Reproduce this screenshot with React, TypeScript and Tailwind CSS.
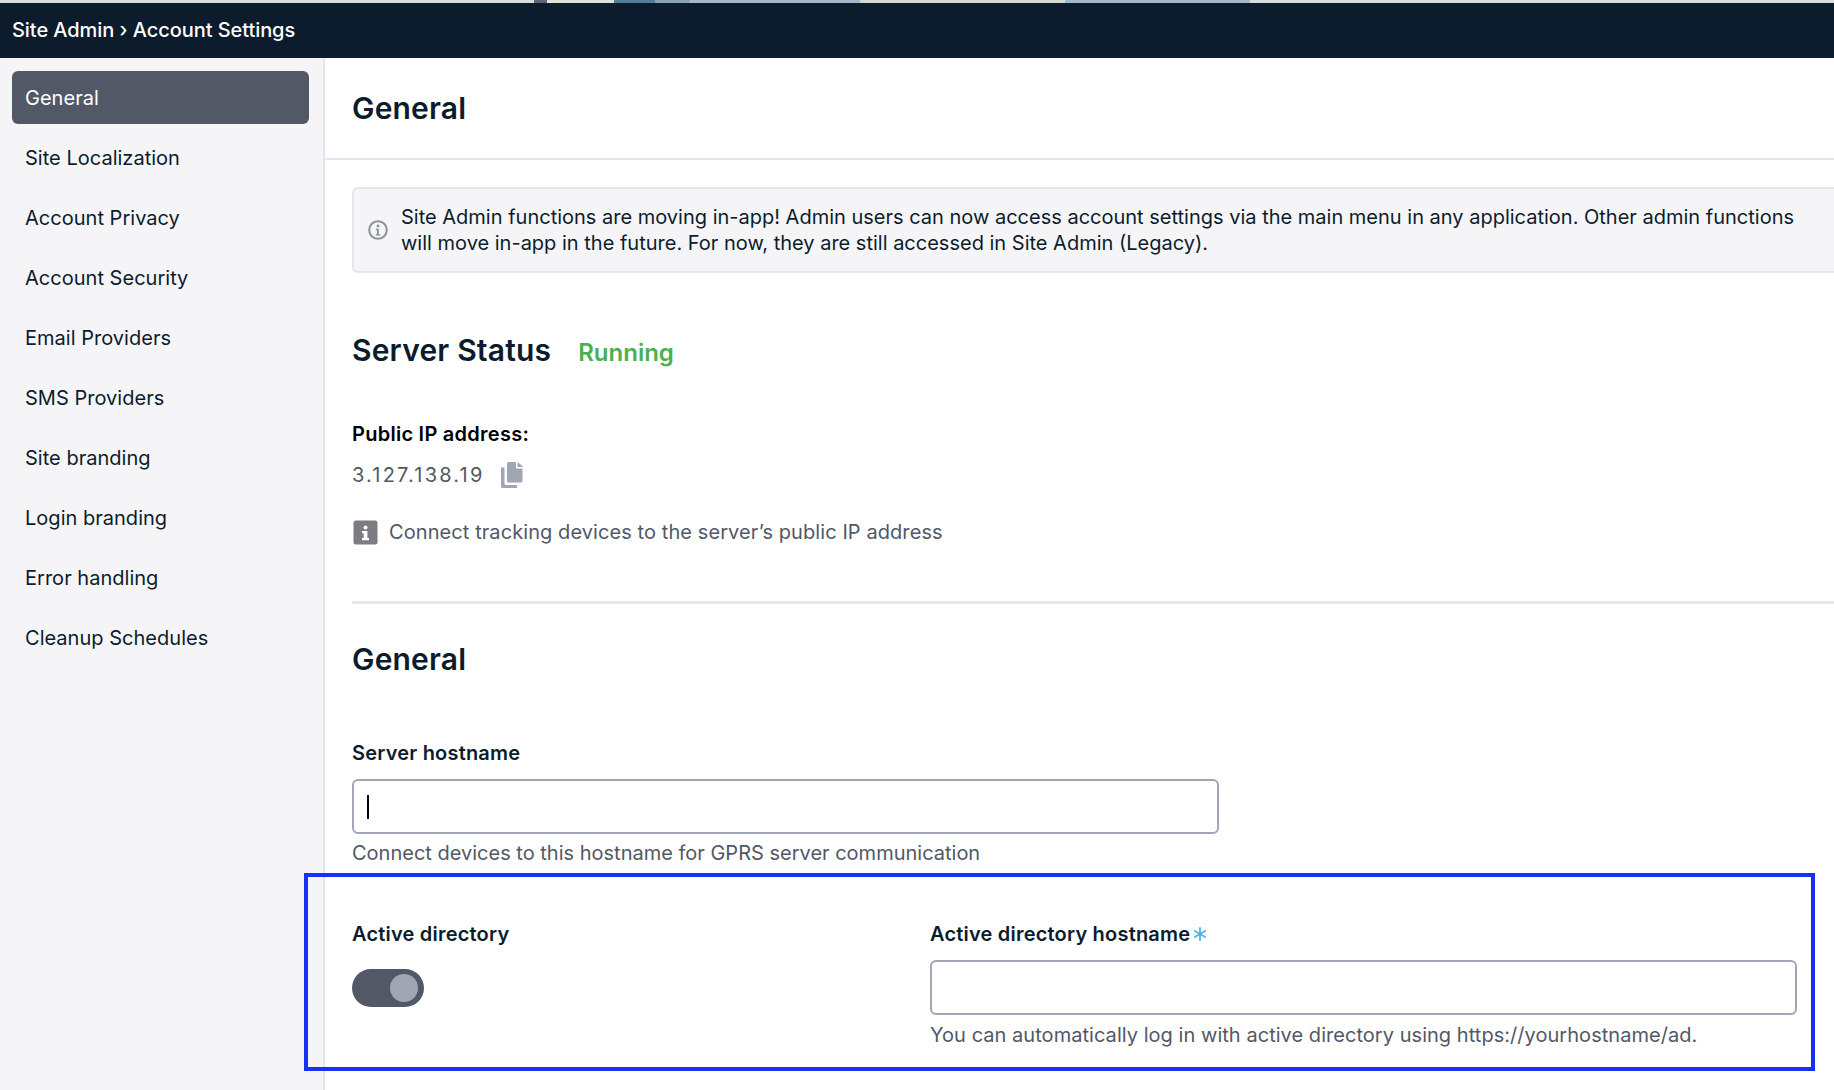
import { ReactNode } from 'react';
import { Asterisk } from 'lucide-react';

const navItems = [
  'General',
  'Site Localization',
  'Account Privacy',
  'Account Security',
  'Email Providers',
  'SMS Providers',
  'Site branding',
  'Login branding',
  'Error handling',
  'Cleanup Schedules',
];

const CircleInfo = () => (
  <svg width="20" height="20" viewBox="0 0 20 20" fill="none" className="shrink-0">
    <circle cx="10" cy="10" r="8.8" stroke="#8a909c" strokeWidth="2" />
    <circle cx="10" cy="6" r="1.4" fill="#8a909c" />
    <path d="M7.8 8.8h3v5.2h1.4v1.5H7.8V14h1.2v-3.7H7.8z" fill="#8a909c" />
  </svg>
);

const SquareInfo = () => (
  <svg width="25" height="25" viewBox="0 0 25 25" className="shrink-0">
    <rect x="0.5" y="0.5" width="24" height="24" rx="2.5" fill="#7b7d82" />
    <circle cx="12.5" cy="7.5" r="2" fill="#fff" />
    <path d="M9 11h5.4v7h1.6v2.2H9V18h1.7v-4.8H9z" fill="#fff" />
  </svg>
);

const CopyIcon = () => (
  <svg width="24" height="26" viewBox="0 0 24 26" className="shrink-0">
    <path d="M0 5.5h3.5V21.5a1.5 1.5 0 0 0 1.5 1.5h11V26H1.5A1.5 1.5 0 0 1 0 24.5z" fill="#a0a6b4" />
    <path d="M6 1.5A1.5 1.5 0 0 1 7.5 0H15v6.5h6.5V19a1.5 1.5 0 0 1-1.5 1.5H7.5A1.5 1.5 0 0 1 6 19z" fill="#a0a6b4" />
    <path d="M16.6 0l5.9 5H16.6z" fill="#a0a6b4" />
  </svg>
);

const Label = ({ children }: { children: ReactNode }) => (
  <div className="flex h-[26px] items-center text-[20px] leading-[26px] font-semibold tracking-[0.01em] text-[#0c1c2c]">{children}</div>
);

const App = () => {
  return (
    <div className="h-[1090px] w-[1834px] overflow-hidden bg-white font-['Inter',sans-serif] text-[#0c1c2c]">
      {/* sliver of the map behind the panel */}
      <div className="flex h-[3px] bg-[#dcdcdc]">
        <div className="w-[534px]" />
        <div className="w-[13px] bg-[#5d6674]" />
        <div className="w-[67px] bg-[#dfe3d6]" />
        <div className="w-[41px] bg-[#4f7f9b]" />
        <div className="w-[35px] bg-[#8ba3b3]" />
        <div className="w-[170px] bg-[#a3b9cb]" />
        <div className="w-[205px] bg-[#d6d6d2]" />
        <div className="w-[185px] bg-[#a3b9cb]" />
      </div>
      <header className="flex h-[55px] items-center bg-[#0c1c2c] pb-[2px] pl-3 text-[20px] font-medium tracking-[-0.003em] text-white">
        Site Admin › Account Settings
      </header>
      <div className="flex h-[1032px]">
        <aside className="flex w-[325px] shrink-0 flex-col gap-[7px] border-r-2 border-[#e3e6ee] bg-[#f5f5f8] pt-[13px] pr-[14px] pl-3">
          {navItems.map((item, i) => (
            <div
              key={item}
              className={`flex h-[53px] items-center rounded-md px-[13px] text-[20px] tracking-[0.001em] ${
                i === 0 ? 'bg-[#525866] text-white' : 'text-[#0c1c2c]'
              }`}
            >
              {item}
            </div>
          ))}
        </aside>
        <main className="min-w-0 flex-1 overflow-hidden">
          <div className="flex h-[102px] items-center border-b-2 border-[#e3e6ee] pl-[27px] text-[30px] font-semibold tracking-[0.006em]">
            General
          </div>
          <div className="w-[1600px] pl-[27px]">
            <div className="mt-[27px] flex h-[86px] w-[1573px] items-center gap-[13px] rounded-md border-2 border-[#e3e6ee] bg-[#f5f5f8] pl-[14px] text-[20px] leading-[26px]">
              <CircleInfo />
              <p className="w-[1400px]">
                Site Admin functions are moving in-app! Admin users can now access account settings via the main menu in any application. Other admin functions will move in-app in the future. For now, they are still accessed in Site Admin (Legacy).
              </p>
            </div>

            <div className="mt-[57px] flex h-[40px] items-center gap-[27px]">
              <h2 className="text-[30px] font-semibold tracking-[0.006em]">Server Status</h2>
              <span className="mt-[6px] text-[24px] font-semibold text-[#4caf50]">Running</span>
            </div>

            <div className="mt-[51px] text-[20px] leading-[26px] font-semibold tracking-[0.013em] text-black">Public IP address:</div>
            <div className="mt-[13px] flex h-[30px] items-center gap-4">
              <span className="text-[20px] tracking-[0.11em] text-[#525866]">3.127.138.19</span>
              <CopyIcon />
            </div>
            <div className="mt-[27px] flex h-[30px] w-[1000px] items-center gap-[11px] pl-[1px] text-[20px] tracking-[0.004em] text-[#525866]">
              <SquareInfo />
              Connect tracking devices to the server’s public IP address
            </div>

            <div className="mt-[54px] h-[3px] w-[1482px] bg-[#e3e6ee]" />

            <h2 className="mt-[35px] text-[30px] leading-[40px] font-semibold tracking-[0.006em]">General</h2>

            <div className="mt-[61px]">
              <Label>Server hostname</Label>
            </div>
            <div className="mt-[13px] flex h-[55px] w-[867px] items-center rounded-md border-2 border-[#a0a6b4] pl-[13px]">
              <div className="h-[24px] w-[2px] bg-black" />
            </div>
            <div className="mt-[6px] text-[20px] leading-[26px] text-[#525866]">
              Connect devices to this hostname for GPRS server communication
            </div>

            <div className="mt-[55px] flex">
              <div className="w-[578px] shrink-0">
                <Label>Active directory</Label>
                <div className="mt-[22px] flex h-[38px] w-[72px] items-center justify-end rounded-full bg-[#525866] pr-[6px]">
                  <div className="h-[28px] w-[28px] rounded-full bg-[#a0a6b4]" />
                </div>
              </div>
              <div className="w-[867px]">
                <Label>
                  Active directory hostname
                  <Asterisk size={24} strokeWidth={1.8} className="ml-[-2px] text-[#4db5e6]" />
                </Label>
                <div className="mt-[13px] h-[55px] rounded-md border-2 border-[#a0a6b4]" />
                <div className="mt-[7px] text-[20px] leading-[26px] tracking-[0.002em] whitespace-nowrap text-[#525866]">
                  You can automatically log in with active directory using https://yourhostname/ad.
                </div>
              </div>
            </div>
          </div>
        </main>
      </div>
      {/* blue highlight drawn over the screenshot */}
      <div className="absolute top-[873px] left-[304px] h-[198px] w-[1511px] border-4 border-[#1431f5]" />
    </div>
  );
};

export default App;
